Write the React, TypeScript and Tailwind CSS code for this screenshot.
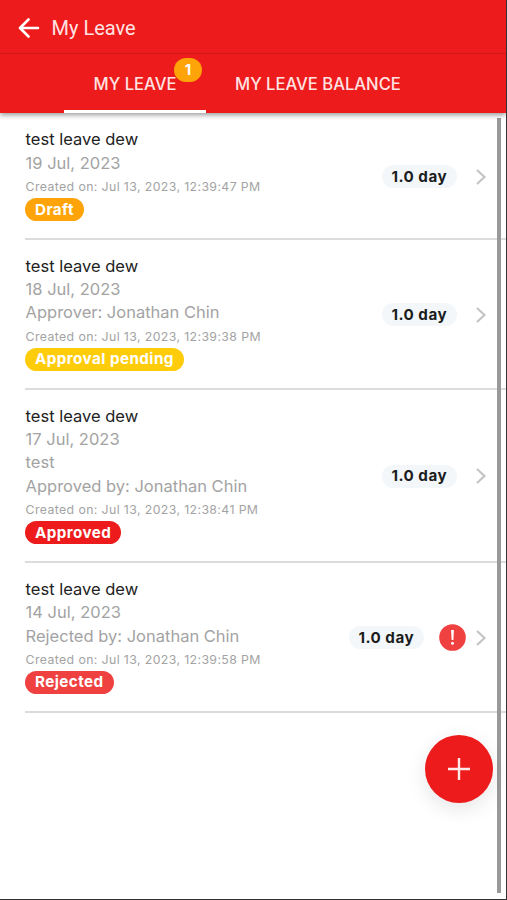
import { ReactNode } from 'react';

type Leave = {
  title: string;
  lines: string[];
  createdOn: string;
  status: string;
  statusClass: string;
  days: string;
  alert?: boolean;
};

const LEAVES: Leave[] = [
  {
    title: 'test leave dew',
    lines: ['19 Jul, 2023'],
    createdOn: 'Jul 13, 2023, 12:39:47 PM',
    status: 'Draft',
    statusClass: 'bg-[#ffa408]',
    days: '1.0 day',
  },
  {
    title: 'test leave dew',
    lines: ['18 Jul, 2023', 'Approver: Jonathan Chin'],
    createdOn: 'Jul 13, 2023, 12:39:38 PM',
    status: 'Approval pending',
    statusClass: 'bg-[#ffcc0a]',
    days: '1.0 day',
  },
  {
    title: 'test leave dew',
    lines: ['17 Jul, 2023', 'test', 'Approved by: Jonathan Chin'],
    createdOn: 'Jul 13, 2023, 12:38:41 PM',
    status: 'Approved',
    statusClass: 'bg-[#ed1b1b]',
    days: '1.0 day',
  },
  {
    title: 'test leave dew',
    lines: ['14 Jul, 2023', 'Rejected by: Jonathan Chin'],
    createdOn: 'Jul 13, 2023, 12:39:58 PM',
    status: 'Rejected',
    statusClass: 'bg-[#f04141]',
    days: '1.0 day',
    alert: true,
  },
];

function Pill({ className, children }: { className: string; children: ReactNode }) {
  return (
    <span className={`inline-flex h-[23px] items-center rounded-full px-[10px] pt-px text-[15.2px] font-bold tracking-[0.45px] ${className}`}>
      {children}
    </span>
  );
}

function LeaveRow({ leave }: { leave: Leave }) {
  return (
    <li className="ml-[25px] flex items-center border-b-2 border-[#dcdcdc] pr-[19px]">
      <div className="min-w-0 flex-1 pt-[14.5px] pb-[17.5px]">
        <div className="pl-[0.6px]">
          <h2 className="text-[16.5px] leading-[23.3px] text-[#222222]">{leave.title}</h2>
          {leave.lines.map(line => (
            <p key={line} className="text-[16.5px] leading-[23.3px] text-[#a3a3a3]">{line}</p>
          ))}
          <p className="pt-[2.5px] pb-[0.5px] text-[12.3px] leading-[20px] tracking-[0.39px] text-[#a3a3a3]">Created on: {leave.createdOn}</p>
        </div>
        <div className="flex">
          <Pill className={`text-white ${leave.statusClass}`}>{leave.status}</Pill>
        </div>
      </div>
      <div className="flex items-center pt-px">
        <Pill className="bg-[#f4f7fa] text-[#1b1d20]">{leave.days}</Pill>
        {leave.alert && (
          <svg className="ml-[15px]" width="27" height="27" viewBox="0 0 27 27" aria-hidden="true">
            <circle cx="13.5" cy="13.5" r="13.3" fill="#f04141" />
            <path d="M12.1 6h2.8l-.5 10h-1.8z" fill="#fff" />
            <circle cx="13.5" cy="19.2" r="1.5" fill="#fff" />
          </svg>
        )}
        <svg
          className={leave.alert ? 'ml-[9px]' : 'ml-[18px]'}
          width="12"
          height="18"
          viewBox="0 0 12 18"
          fill="none"
          stroke="#c4c4c4"
          strokeWidth="2.2"
          aria-hidden="true"
        >
          <path d="M2 2l7.5 7L2 16" />
        </svg>
      </div>
    </li>
  );
}

export default function App() {
  return (
    <div className="relative flex h-[900px] w-[507px] flex-col overflow-hidden border-r border-b border-[#333333] bg-white font-['Inter',sans-serif]">
      <header className="z-10 bg-[#ed1b1b] text-[#ffe3e3] shadow-[0_2px_5px_rgba(0,0,0,0.4)]">
        <div className="flex h-[54px] items-center border-b border-[#d01818] pl-[18px] pt-[3px]">
          <svg width="22" height="20" viewBox="0 0 22 20" fill="none" stroke="#fff" strokeWidth="2.6" strokeLinecap="round" strokeLinejoin="round" aria-hidden="true">
            <path d="M10.5 1.5L2 10l8.5 8.5M2.5 10H20" />
          </svg>
          <h1 className="ml-[11.5px] pb-px font-['Roboto',sans-serif] text-[20px]">My Leave</h1>
        </div>
        <nav className="flex h-[59px] pl-16 text-[16.6px] font-medium">
          <div className="relative flex w-[142px] items-center justify-center border-b-[3px] border-white pt-[5px]">
            MY LEAVE
            <span className="absolute top-[4px] left-[110px] flex h-[24px] w-[28px] items-center justify-center rounded-full bg-[#ffa408] text-[15px] font-bold text-white">
              1
            </span>
          </div>
          <div className="flex items-center pt-[2px] pl-[29px]">MY LEAVE BALANCE</div>
        </nav>
      </header>

      <ul className="flex-1 pt-[0.8px]">
        {LEAVES.map(leave => (
          <LeaveRow key={leave.lines[0]} leave={leave} />
        ))}
      </ul>

      <div className="absolute top-[118px] right-[5px] h-[775px] w-[4px] bg-[#999999]" />

      <button
        aria-label="Add leave"
        className="absolute top-[735px] left-[425px] flex h-[68px] w-[68px] items-center justify-center rounded-full bg-[#ed1b1b] shadow-[0_6px_20px_rgba(0,0,0,0.1)]"
      >
        <svg width="22" height="22" viewBox="0 0 22 22" stroke="#ffe9e9" strokeWidth="2.4" aria-hidden="true">
          <path d="M11 0v22M0 11h22" />
        </svg>
      </button>
    </div>
  );
}
